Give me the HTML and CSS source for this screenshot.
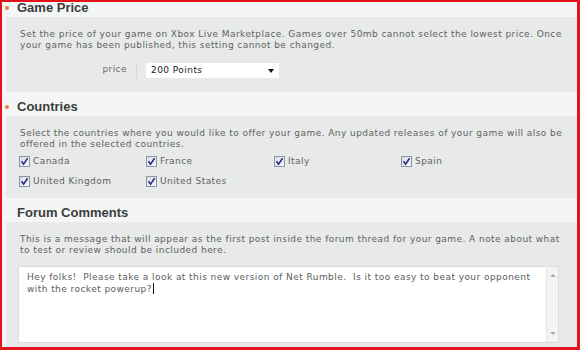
FILE: index.html
```html
<!DOCTYPE html>
<html lang="en">
<head>
  <meta charset="UTF-8" />
  <title>Game Settings</title>
  <link rel="stylesheet" href="styles.css">
</head>
<body>

<div class="frame">

  <h2 class="sec-head bullet first">Game Price</h2>
  <div class="panel price-panel">
    <p class="note">Set the price of your game on Xbox Live Marketplace. Games over 50mb cannot select the lowest price. Once your game has been published, this setting cannot be changed.</p>
    <div class="price-row">
      <span class="price-label">price</span>
      <div class="select">200 Points<span class="arrow"></span></div>
    </div>
  </div>

  <h2 class="sec-head bullet">Countries</h2>
  <div class="panel">
    <p class="note">Select the countries where you would like to offer your game. Any updated releases of your game will also be offered in the selected countries.</p>
    <div class="countries">
      <label class="country"><span class="cb"><svg width="9" height="9" viewBox="0 0 9 9"><path d="M1.5 4.2 L3.6 7.2 L7.6 1.2" fill="none" stroke="#22318a" stroke-width="1.6"/></svg></span>Canada</label>
      <label class="country"><span class="cb"><svg width="9" height="9" viewBox="0 0 9 9"><path d="M1.5 4.2 L3.6 7.2 L7.6 1.2" fill="none" stroke="#22318a" stroke-width="1.6"/></svg></span>France</label>
      <label class="country"><span class="cb"><svg width="9" height="9" viewBox="0 0 9 9"><path d="M1.5 4.2 L3.6 7.2 L7.6 1.2" fill="none" stroke="#22318a" stroke-width="1.6"/></svg></span>Italy</label>
      <label class="country"><span class="cb"><svg width="9" height="9" viewBox="0 0 9 9"><path d="M1.5 4.2 L3.6 7.2 L7.6 1.2" fill="none" stroke="#22318a" stroke-width="1.6"/></svg></span>Spain</label>
      <label class="country"><span class="cb"><svg width="9" height="9" viewBox="0 0 9 9"><path d="M1.5 4.2 L3.6 7.2 L7.6 1.2" fill="none" stroke="#22318a" stroke-width="1.6"/></svg></span>United Kingdom</label>
      <label class="country"><span class="cb"><svg width="9" height="9" viewBox="0 0 9 9"><path d="M1.5 4.2 L3.6 7.2 L7.6 1.2" fill="none" stroke="#22318a" stroke-width="1.6"/></svg></span>United States</label>
    </div>
  </div>

  <h2 class="sec-head">Forum Comments</h2>
  <div class="panel last">
    <p class="note">This is a message that will appear as the first post inside the forum thread for your game. A note about what to test or review should be included here.</p>
    <div class="textbox">
      <div class="textbox-text">Hey folks!  Please take a look at this new version of Net Rumble.  Is it too easy to beat your opponent with the rocket powerup?<span class="caret"></span></div>
      <div class="scroll">
        <span class="up"></span>
        <span class="down"></span>
      </div>
    </div>
  </div>

</div>

</body>
</html>
```

FILE: styles.css
```css
* {
  margin: 0;
  padding: 0;
  box-sizing: border-box;
}
body {
  width: 580px;
  height: 350px;
  overflow: hidden;
  font-family: 'DejaVu Sans', Verdana, sans-serif;
  letter-spacing: 0.44px;
  background: #ffffff;
}

.frame {
  display: flex;
  flex-direction: column;
  height: 350px;
  border-style: solid;
  border-color: #e3131b;
  border-width: 2px 3px 3px 2px;
  background: #f4f6f5;
  overflow: hidden;
}

.sec-head {
  height: 24px;
  padding: 4px 0 0 15px;
  line-height: 21px;
  font-family: 'Liberation Sans', Arial, sans-serif;
  font-size: 13px;
  font-weight: bold;
  letter-spacing: 0;
  color: #3a3d3c;
}
.sec-head.first {
  margin-top: -9px;
}
.bullet {
  padding-left: 3px;
}
.bullet::before {
  content: "";
  display: inline-block;
  width: 4px;
  height: 4px;
  margin: 0 8px 0 0;
  border-radius: 50%;
  background: #ee7a3c;
  vertical-align: 2px;
}

.panel {
  margin-left: 4px;
  padding: 12px 13px 7px 14px;
  background: #e7eae8;
}
.price-panel {
  padding-bottom: 13px;
}
.panel.last {
  flex: 1;
  padding-bottom: 0;
}

.note {
  font-size: 9px;
  line-height: 10.5px;
  color: #5f6261;
}

.price-row {
  display: flex;
  align-items: center;
  margin-top: 12px;
  height: 17px;
}
.price-label {
  width: 117px;
  height: 17px;
  padding-right: 9px;
  border-right: 1px solid #d6dad8;
  text-align: right;
  font-size: 9px;
  line-height: 15px;
  color: #6a6d6c;
}
.select {
  position: relative;
  width: 133px;
  height: 15px;
  margin-left: 9px;
  padding-left: 5px;
  background: #ffffff;
  font-size: 9px;
  line-height: 15px;
  color: #222;
}
.arrow {
  position: absolute;
  right: 5px;
  top: 6px;
  border-left: 3.5px solid transparent;
  border-right: 3.5px solid transparent;
  border-top: 4px solid #111;
}

.countries {
  display: grid;
  grid-template-columns: 127px 128px 127px 128px;
  grid-auto-rows: 20px;
  margin-top: 2px;
}
.country {
  display: flex;
  align-items: center;
  font-size: 9px;
  color: #5f6261;
}
.cb {
  display: flex;
  align-items: center;
  justify-content: center;
  width: 11px;
  height: 11px;
  margin: 0 3px 0 -1px;
  border: 1px solid #8d93a3;
  background: linear-gradient(135deg, #d9dce4, #f7f8fa);
}

.textbox {
  display: flex;
  height: 77px;
  margin: 11px 5px 0 -2px;
  border: 1px solid #d9dddb;
  background: #ffffff;
}
.textbox-text {
  flex: 1;
  padding: 5px 8px 0 8px;
  font-size: 9px;
  line-height: 11px;
  color: #5a5d5c;
  white-space: pre-wrap;
}
.caret {
  display: inline-block;
  width: 1px;
  height: 11px;
  margin-left: 1px;
  background: #111;
  vertical-align: -2px;
}
.scroll {
  display: flex;
  flex-direction: column;
  justify-content: space-between;
  align-items: center;
  width: 12px;
  padding: 7px 0 7px;
  border-left: 1px solid #e4e6e5;
  background: #f3f4f4;
}
.up {
  border-left: 3px solid transparent;
  border-right: 3px solid transparent;
  border-bottom: 3px solid #a9acab;
}
.down {
  border-left: 3px solid transparent;
  border-right: 3px solid transparent;
  border-top: 3px solid #a9acab;
}
```
